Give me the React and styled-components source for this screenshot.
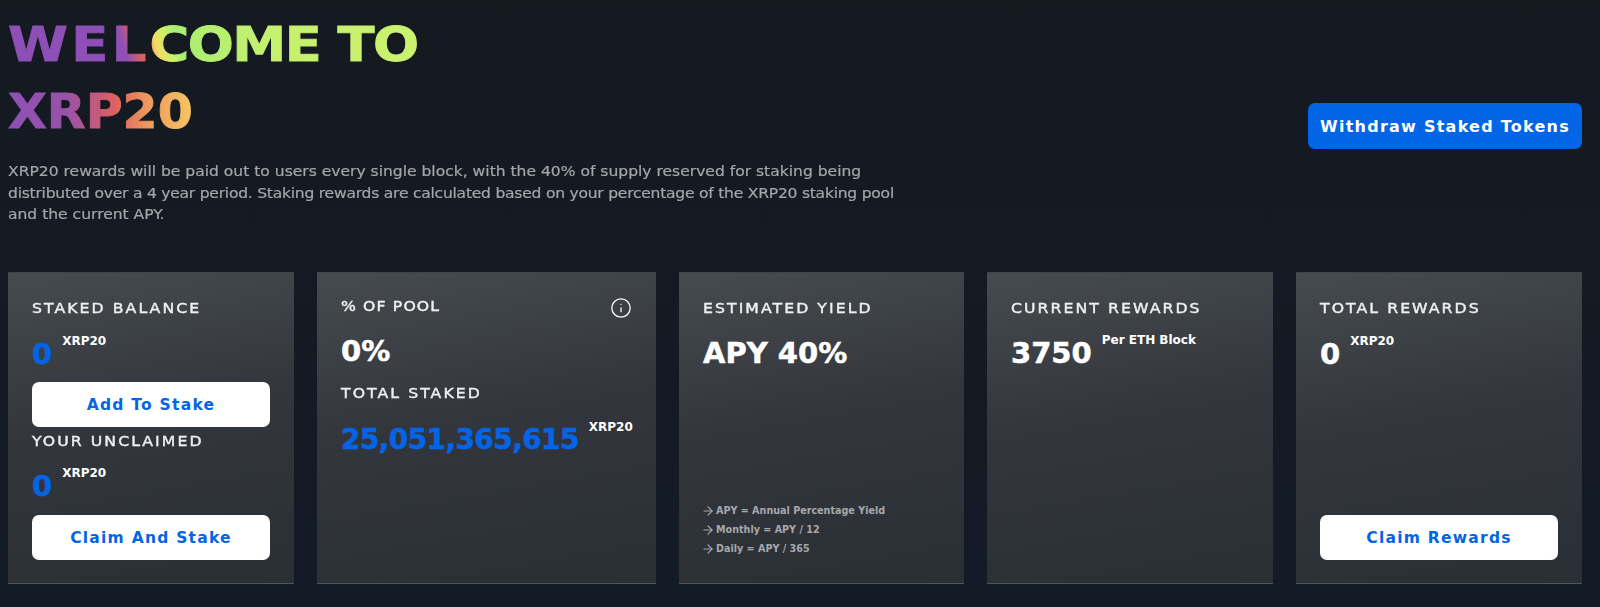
import React from "react";
import styled, { createGlobalStyle } from "styled-components";
import { Info, ArrowRight } from "lucide-react";

const Global = createGlobalStyle`
  html, body { margin: 0; padding: 0; }
  body {
    width: 1600px; height: 607px; overflow: hidden;
    background: linear-gradient(180deg, #151a21 0%, #141a23 60%, #131b27 100%);
    font-family: "DejaVu Sans", "Liberation Sans", sans-serif;
  }
`;
const Page = styled.div`
  display: flex; flex-direction: column;
  padding: 0 18px 0 8px; height: 607px; box-sizing: border-box;
`;
const Header = styled.header`
  display: flex; justify-content: space-between; align-items: flex-start; height: 272px;
`;
const Intro = styled.div`
  width: 880px; padding-top: 11px;
`;
const TitleLine = styled.h1`
  display: block; width: fit-content;
  transform: scaleX(${p => p.$x}); transform-origin: left center;
  margin: 0;
  font-size: 48px; line-height: 67px; font-weight: 700;
  white-space: nowrap;
  -webkit-text-stroke: 1px transparent;
  background: ${p => p.$bg};
  -webkit-background-clip: text; background-clip: text;
  color: transparent;
`;
const Tracked = styled.span`
  letter-spacing: ${p => p.$track}px;
`;
const Lead = styled.p`
  display: block; width: fit-content;
  transform: scaleX(1.11); transform-origin: left center;
  margin: 16px 0 0;
  font-size: 14px; line-height: 21.7px; color: #a3a5a8; font-weight: 400;
  -webkit-text-stroke: .2px #a3a5a8;
  white-space: nowrap;
`;
const LeadLine = styled.span`
  display: block;
  letter-spacing: ${p => p.$track ?? 0}px;
`;
const PrimaryButton = styled.button`
  width: 274px; height: 46px; border: 0; border-radius: 7px;
  background: #0265e6; color: #fff;
  font: 700 16px "DejaVu Sans", sans-serif;
  letter-spacing: 1.25px;
  margin-top: 103px;
`;
const Cards = styled.section`
  display: flex; gap: 23px;
`;
const Card = styled.article`
  width: ${p => p.$w}px; height: 312px; box-sizing: border-box;
  padding: 27px 24px 23px;
  display: flex; flex-direction: column;
  background: linear-gradient(170deg, #464b50 0%, #33373d 45%, #2a2e35 100%);
  border-top: 1px solid #3f4448;
  border-bottom: 1px solid #50555a;
  color: #fff;
`;
const LabelRow = styled.div`
  display: flex; justify-content: space-between; align-items: flex-start; height: 18px;
  margin-top: ${p => p.$mt ?? 0}px;
`;
const Label = styled.div`
  display: block; width: fit-content;
  transform: scaleX(1.12); transform-origin: left center;
  margin-top: ${p => p.$mt ?? 0}px;
  font-size: 14px; line-height: 16px; font-weight: 400; letter-spacing: ${p => p.$track ?? 1.85}px; color: #f0f0f0; white-space: nowrap;
  -webkit-text-stroke: .4px #f0f0f0;
`;
const ValueRow = styled.div`
  display: flex; align-items: flex-start; gap: 10px; margin-top: ${p => p.$mt ?? 18}px;
  justify-content: ${p => p.$spread ? "space-between" : "flex-start"};
`;
const Value = styled.div`
  font-size: ${p => p.$size ?? 29}px; line-height: 36px; font-weight: 700; white-space: nowrap;
  letter-spacing: ${p => p.$track ?? 0}px;
  color: ${p => p.$blue ? "#0265e6" : "#fff"};
  -webkit-text-stroke: .5px ${p => p.$blue ? "#0265e6" : "#fff"};
`;
const Unit = styled.sup`
  font-size: 12px; line-height: 14px; font-weight: 700; color: #fff; vertical-align: baseline; white-space: nowrap;
  margin-top: -2px;
`;
const WhiteButton = styled.button`
  width: 238px; height: 45px; flex: none; border: 0; border-radius: 7px;
  background: #fff; color: #0265e6;
  font: 700 15.5px "DejaVu Sans", sans-serif; letter-spacing: 1.25px;
  margin-top: ${p => p.$mt ?? 0}px;
`;
const Notes = styled.ul`
  list-style: none; margin: auto 0 0; padding: 0 0 4px;
  display: flex; flex-direction: column; gap: 4.5px;
`;
const Note = styled.li`
  display: flex; align-items: center; gap: 1px; margin-left: -2px; font-size: 9.6px; line-height: 14.5px; font-weight: 700; color: #a7a8aa;
`;
const InfoIcon = styled(Info)`
  margin-top: -1px; flex: none;
`;
const Spacer = styled.div`
  margin-top: auto;
`;

const L1 = "linear-gradient(75deg, #8e4fb6 0px, #8e4fb6 106px, #e2615c 121px, #ee9a5e 127px, #f0dc66 135px, #cdf06c 146px, #a9ee72 154px, #c6f06f 230px, #cbf26f 100%)";
const L2 = "linear-gradient(90deg, #8e4fb6 0%, #9a52a8 32%, #dc6060 58%, #ee9a5e 76%, #f5c762 100%)";

export default function App() {
  return (
    <Page>
      <Global />
      <Header>
        <Intro>
          <TitleLine $x={1.13} $bg={L1}><Tracked $track={3}>WEL</Tracked><Tracked $track={-1.4}>COME TO</Tracked></TitleLine>
          <TitleLine $x={1.05} $bg={L2}>XRP20</TitleLine>
          <Lead>
            <LeadLine>XRP20 rewards will be paid out to users every single block, with the 40% of supply reserved for staking being</LeadLine>
            <LeadLine $track={-0.21}>distributed over a 4 year period. Staking rewards are calculated based on your percentage of the XRP20 staking pool</LeadLine>
            <LeadLine>and the current APY.</LeadLine>
          </Lead>
        </Intro>
        <PrimaryButton>Withdraw Staked Tokens</PrimaryButton>
      </Header>
      <Cards>
        <Card $w={286}>
          <LabelRow><Label>STAKED BALANCE</Label></LabelRow>
          <ValueRow><Value $blue>0</Value><Unit>XRP20</Unit></ValueRow>
          <WhiteButton $mt={10}>Add To Stake</WhiteButton>
          <Label $mt={6}>YOUR UNCLAIMED</Label>
          <ValueRow $mt={19}><Value $blue>0</Value><Unit>XRP20</Unit></ValueRow>
          <WhiteButton $mt={11}>Claim And Stake</WhiteButton>
        </Card>
        <Card $w={339}>
          <LabelRow $mt={-2}><Label $track={1.0}>% OF POOL</Label><InfoIcon size={22} strokeWidth={1.4} color="#fff" /></LabelRow>
          <ValueRow $mt={17}><Value>0%</Value></ValueRow>
          <Label $mt={16}>TOTAL STAKED</Label>
          <ValueRow $spread $mt={21}><Value $blue $size={28} $track={-0.6}>25,051,365,615</Value><Unit>XRP20</Unit></ValueRow>
        </Card>
        <Card $w={286}>
          <LabelRow><Label>ESTIMATED YIELD</Label></LabelRow>
          <ValueRow $mt={17}><Value>APY 40%</Value></ValueRow>
          <Notes>
            <Note><ArrowRight size={14} />APY = Annual Percentage Yield</Note>
            <Note><ArrowRight size={14} />Monthly = APY / 12</Note>
            <Note><ArrowRight size={14} />Daily = APY / 365</Note>
          </Notes>
        </Card>
        <Card $w={287}>
          <LabelRow><Label>CURRENT REWARDS</Label></LabelRow>
          <ValueRow $mt={17}><Value>3750</Value><Unit>Per ETH Block</Unit></ValueRow>
        </Card>
        <Card $w={286}>
          <LabelRow><Label>TOTAL REWARDS</Label></LabelRow>
          <ValueRow><Value>0</Value><Unit>XRP20</Unit></ValueRow>
          <Spacer />
          <WhiteButton>Claim Rewards</WhiteButton>
        </Card>
      </Cards>
    </Page>
  );
}
